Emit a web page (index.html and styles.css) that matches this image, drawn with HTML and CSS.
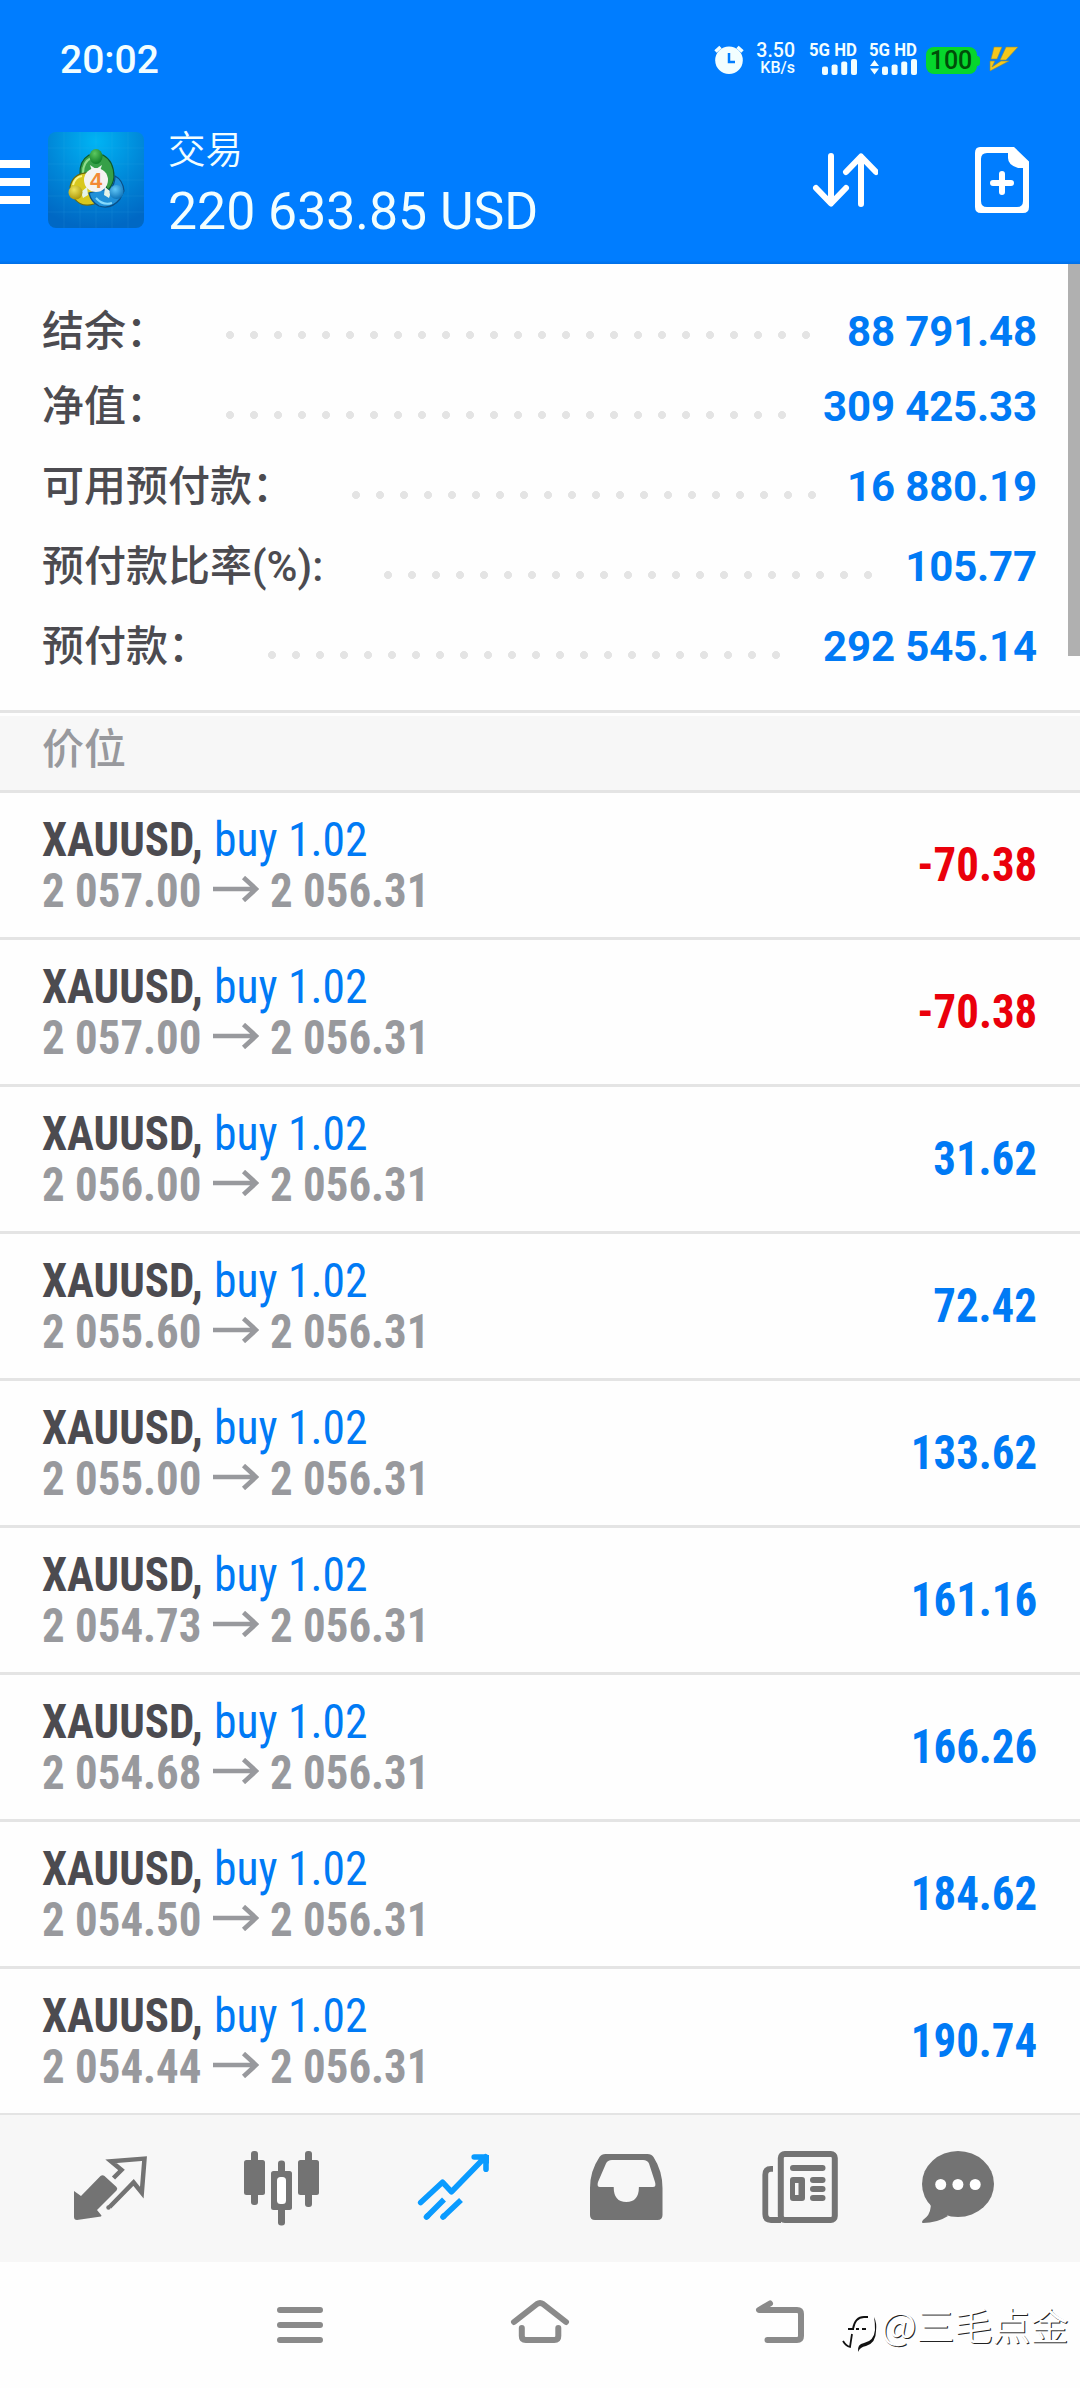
FILE: index.html
```html
<!DOCTYPE html>
<html lang="zh-CN">
<head>
<meta charset="utf-8">
<title>交易</title>
<link rel="stylesheet" href="styles.css">
</head>
<body>
<header class="header">
  <div class="status">
    <span class="clock">20:02</span>
    <svg class="alarm" width="30" height="30" viewBox="714 45 30 30"><circle cx="729" cy="60.300" r="13.800" fill="#f2feff"/><path d="M715.500 51.500l5-4.500M742.500 51.500l-5-4.500" stroke="#f2feff" stroke-width="3.500"/><path d="M729 53v9h6" fill="none" stroke="#007dff" stroke-width="2.500"/></svg>
    <div class="speed"><span>3.50</span><small>KB/s</small></div>
    <div class="signal"><b>5G HD</b>
      <svg width="48" height="17" viewBox="809 59 48 17" fill="#f2feff"><rect x="822" y="66.500" width="6" height="8.500" rx="2"/><rect x="831.600" y="64.500" width="6" height="10.500" rx="2"/><rect x="841.200" y="61.500" width="6" height="13.500" rx="2"/><rect x="851" y="59" width="6" height="16" rx="2"/></svg></div>
    <div class="signal"><b>5G HD</b>
      <svg width="48" height="17" viewBox="809 59 48 17" fill="#f2feff"><path d="M810 66l4.500-6 4.500 6zM810 68.500l4.500 6 4.500-6z"/><rect x="822" y="66.500" width="6" height="8.500" rx="2"/><rect x="831.600" y="64.500" width="6" height="10.500" rx="2"/><rect x="841.200" y="61.500" width="6" height="13.500" rx="2"/><rect x="851" y="59" width="6" height="16" rx="2"/></svg></div>
    <div class="battery">100</div>
    <svg class="bolt" width="30" height="26" viewBox="990 46 30 26"><path d="M995 47h8l-5 12h-6zM1007 47h12l-12 13h-6zM991 61h5l-3 6 9-6h8l-19 10z" fill="#f6c71c" stroke="#7d8a50" stroke-width=".6"/></svg>
  </div>
  <div class="appbar">
    <svg class="menu" width="30" height="44" viewBox="0 0 30 44" fill="#fff"><path d="M0 0h30v8H0zM0 18h30v8H0zM0 36h30v8H0z"/></svg>
    <svg class="logo" width="96" height="96" viewBox="0 0 96 96">
      <defs>
        <radialGradient id="sky" cx=".5" cy=".1" r=".9"><stop offset="0" stop-color="#00b4f4"/><stop offset=".55" stop-color="#0087d8"/><stop offset="1" stop-color="#0068c4"/></radialGradient>
        <radialGradient id="gr" cx=".4" cy=".3" r=".8"><stop offset="0" stop-color="#5cc860"/><stop offset="1" stop-color="#04731f"/></radialGradient>
        <radialGradient id="ye" cx=".4" cy=".3" r=".8"><stop offset="0" stop-color="#eee45a"/><stop offset="1" stop-color="#a58e00"/></radialGradient>
        <radialGradient id="bl" cx=".4" cy=".3" r=".8"><stop offset="0" stop-color="#62c8f8"/><stop offset="1" stop-color="#0468b0"/></radialGradient>
      </defs>
      <rect width="96" height="96" rx="8" fill="url(#sky)"/>
      <path d="M16 0v96M32 0v96M48 0v96M64 0v96M80 0v96M0 16h96M0 32h96M0 48h96M0 64h96M0 80h96" stroke="#41b6ee" stroke-opacity=".12" fill="none"/>
      <g stroke-width="1.200">
        <path d="M32 43q-1-14 9-20h14q11 6 11 22-1 8-6 13l-6-10z" fill="#36a048" stroke="#0e5a2c"/>
        <path d="M35 41q0-11 8-15" fill="none" stroke="#8fdc8c" stroke-width="2"/>
        <path d="M42 41q-17-1-20 14l4 11q7 10 20 6l8-7-12-8z" fill="#d8c81e" stroke="#6a6a10"/>
        <path d="M25 53q2-8 9-9" fill="none" stroke="#fbf48a" stroke-width="2"/>
        <path d="M62 58q5-6 5-14 8 4 9 15l-4 8q-9 11-21 7-8-4-10-13l12-3z" fill="#2090d8" stroke="#0b4f86"/>
        <path d="M48 66q7 8 16 5" fill="none" stroke="#86dafc" stroke-width="2"/>
      </g>
      <path d="M42 33l6 4 6-4-2 6h-8zM33 60l6-5 1 8-5 3zM63 60l-6-5-1 8 5 3z" fill="#e4f3e8"/>
      <ellipse cx="48" cy="24.500" rx="6.500" ry="7.500" fill="url(#gr)"/><circle cx="27.500" cy="60.500" r="7" fill="url(#ye)"/><circle cx="68.500" cy="60" r="7" fill="url(#bl)"/>
      <circle cx="48" cy="48" r="12" fill="#f4f3f1"/>
      <text x="48" y="56" text-anchor="middle" class="four">4</text>
    </svg>
    <div class="titles"><div class="title">交易</div><div class="total"><span>220 633.85 USD</span></div></div>
    <svg class="sort" width="66" height="60" viewBox="812 150 66 60" fill="none" stroke="#fff" stroke-width="6" stroke-linecap="round" stroke-linejoin="round"><path d="M831 156v47M816 188l15 15.500 15-15.500M861 204v-47M846 172l15-15.500 15 15.500"/></svg>
    <svg class="doc" width="54" height="66" viewBox="975 147 54 66"><path fill="#fff" fill-rule="evenodd" d="M980 147h34l15 14.500V207q0 6-6 6h-42q-6 0-6-6v-54q0-6 5-6zM987 153q-6 0-6 6v42q0 6 6 6h30q6 0 6-6v-33h-5q-10-3-10-10v-5z"/><path d="M1002 174v18M993 183h18" stroke="#fff" stroke-width="6" stroke-linecap="round"/></svg>
  </div>
</header>

<main class="content">
  <div class="scrollbar"></div>
  <section class="summary">
    <div class="sum"><span class="label">结余：</span><i class="dots"></i><b>88 791.48</b></div>
    <div class="sum"><span class="label">净值：</span><i class="dots"></i><b>309 425.33</b></div>
    <div class="sum"><span class="label">可用预付款：</span><i class="dots"></i><b>16 880.19</b></div>
    <div class="sum"><span class="label">预付款比率(%):</span><i class="dots"></i><b>105.77</b></div>
    <div class="sum"><span class="label">预付款：</span><i class="dots"></i><b>292 545.14</b></div>
  </section>
  <h2 class="section">价位</h2>
  <svg width="0" height="0" class="defs"><symbol id="arrow" viewBox="0 0 46 26"><path d="M0 13h42M30.500 1.500L43 13 30.500 24.500" fill="none" stroke="#98999d" stroke-width="4.600"/></symbol></svg>
  <ul class="positions">
    <li><div><div class="l1"><b>XAUUSD,</b><span>buy 1.02</span></div><div class="l2"><b>2 057.00</b><svg><use href="#arrow"/></svg><b>2 056.31</b></div></div><strong class="loss">-70.38</strong></li>
    <li><div><div class="l1"><b>XAUUSD,</b><span>buy 1.02</span></div><div class="l2"><b>2 057.00</b><svg><use href="#arrow"/></svg><b>2 056.31</b></div></div><strong class="loss">-70.38</strong></li>
    <li><div><div class="l1"><b>XAUUSD,</b><span>buy 1.02</span></div><div class="l2"><b>2 056.00</b><svg><use href="#arrow"/></svg><b>2 056.31</b></div></div><strong>31.62</strong></li>
    <li><div><div class="l1"><b>XAUUSD,</b><span>buy 1.02</span></div><div class="l2"><b>2 055.60</b><svg><use href="#arrow"/></svg><b>2 056.31</b></div></div><strong>72.42</strong></li>
    <li><div><div class="l1"><b>XAUUSD,</b><span>buy 1.02</span></div><div class="l2"><b>2 055.00</b><svg><use href="#arrow"/></svg><b>2 056.31</b></div></div><strong>133.62</strong></li>
    <li><div><div class="l1"><b>XAUUSD,</b><span>buy 1.02</span></div><div class="l2"><b>2 054.73</b><svg><use href="#arrow"/></svg><b>2 056.31</b></div></div><strong>161.16</strong></li>
    <li><div><div class="l1"><b>XAUUSD,</b><span>buy 1.02</span></div><div class="l2"><b>2 054.68</b><svg><use href="#arrow"/></svg><b>2 056.31</b></div></div><strong>166.26</strong></li>
    <li><div><div class="l1"><b>XAUUSD,</b><span>buy 1.02</span></div><div class="l2"><b>2 054.50</b><svg><use href="#arrow"/></svg><b>2 056.31</b></div></div><strong>184.62</strong></li>
    <li><div><div class="l1"><b>XAUUSD,</b><span>buy 1.02</span></div><div class="l2"><b>2 054.44</b><svg><use href="#arrow"/></svg><b>2 056.31</b></div></div><strong>190.74</strong></li>
  </ul>
</main>

<nav class="tabs">
  <svg viewBox="24 0 172 147"><path d="M74 76l7 5 19.500-20q2-1.500 4 0l12 11q1.500 1.500 0 3.500L97 95l4.500 5.500-.5 1L77 105q-3 0-3-3z" fill="#737373"/><path d="M113.500 63l8-8-10.500-8.800 33.500-2.600-2.700 34-8.200-10.100-24 24.500" class="line" stroke-width="4.500"/><circle cx="108.500" cy="92.500" r="2.200" fill="#737373"/></svg>
  <svg viewBox="196 0 172 147" fill="#737373"><rect x="244" y="45" width="21" height="35" rx="2.500"/><rect x="251" y="36" width="7" height="54" rx="3"/><rect x="278" y="45.500" width="7" height="65" rx="3"/><rect x="271" y="56" width="21" height="39" rx="2.500"/><rect x="277" y="62" width="9" height="27" rx="3.500" fill="#fff"/><rect x="298" y="45" width="21" height="35" rx="2.500"/><rect x="305" y="36" width="7" height="56" rx="3"/></svg>
  <svg viewBox="368 0 172 147"><g fill="none" stroke="#0a9bff" stroke-width="5.600" stroke-linecap="round"><path d="M420.700 87.500l21.800-20.300 9 9.600 34-35M474.200 42h11.800v12.200" stroke-linejoin="round"/><path d="M426.500 102L444 84.500M443 102l18-17" stroke-linecap="butt"/><path d="M426.500 102l1-1M443 102l1-1"/></g><path d="M481 40h8v9z" fill="#0a9bff"/></svg>
  <svg viewBox="540 0 172 147"><path fill="#737373" fill-rule="evenodd" d="M605.500 39h42q4 0 6 3 9 14 9 31v27q0 5-5 5H595q-5 0-5-5V73q0-17 9.500-31 2-3 6-3zM612 45q-4.500 0-6 3.500L598 67q-1.500 5 2 5h13.700q0 15 12.600 15t12.600-15H653q3.500 0 2-5l-6-18.500q-1.500-3.500-6-3.500z"/></svg>
  <svg viewBox="712 0 172 147"><rect x="780.800" y="39" width="54" height="66" rx="4" class="line" stroke-width="6"/><path d="M773 53.800h-2q-5.700 0-5.700 6V99q0 6 5.700 6h10" class="line" stroke-width="5.800"/><g fill="#737373"><rect x="790" y="50" width="35.500" height="6" rx="3"/><path fill-rule="evenodd" d="M793 62h9q3 0 3 3v18q0 3-3 3h-9q-3 0-3-3V65q0-3 3-3zm2 6v12h3.500V68z"/><rect x="810" y="62" width="15.500" height="6" rx="3"/><rect x="810" y="71" width="15.500" height="6" rx="3"/><rect x="810" y="80" width="15.500" height="6" rx="3"/></g></svg>
  <svg viewBox="884 0 172 147"><ellipse cx="958" cy="69" rx="36" ry="33" fill="#737373"/><path d="M926 84q6 5 4.500 9-.5 7-7.500 12-2 2.500 0 3 14 0 25-7z" fill="#737373"/><g fill="#fff"><circle cx="940.700" cy="69.500" r="5.500"/><circle cx="957.900" cy="69.500" r="5.500"/><circle cx="975.200" cy="69.500" r="5.500"/></g></svg>
</nav>

<footer class="sysnav">
  <svg width="60" height="60" viewBox="270 33 60 60"><path d="M280 48h40M280 63h40M280 78h40"/></svg>
  <svg width="60" height="60" viewBox="510 33 60 60"><path d="M514 60l23-18q3-2 6 0l23 18M521.800 66v8q0 4 4 4h28.500q4 0 4-4v-8"/></svg>
  <svg width="60" height="60" viewBox="750 33 60 60"><path d="M770 41.500L759 48h38q4 0 4 4v22q0 4-4 4h-29.500"/></svg>
  <div class="watermark"><svg width="40" height="44" viewBox="0 0 40 44"><path d="M7 18h6M12 18q2-12 11-12h4M15 18h3M21 18h4M11 23l-2 13q-4-1-7-6" fill="none" stroke="#111" stroke-width="1.800"/><path d="M33 6q3 6 2 14 0 12-10 15-6 1-8 6-1-8 6-9 10-2 11-13 0-8-1-13z" fill="#111"/></svg><span>@三毛点金</span></div>
</footer>
</body>
</html>
```
FILE: styles.css
```css
* { box-sizing: border-box; }
body { margin: 0; width: 1080px; height: 2388px; overflow: hidden; background: #fefefe; font-family: Roboto, "Noto Sans CJK SC", sans-serif; display: flex; flex-direction: column; }
svg { display: block; flex: none; }
.header { height: 264px; flex: none; color: #f2feff; background: linear-gradient(#007dff 0 260px, #006fe6 264px); }
.status { display: flex; height: 118px; align-items: flex-start; }
.clock { width: 652px; margin: 37px 0 0 60px; font-size: 39px; line-height: 46px; font-weight: 500; }
.alarm { margin: 45px 11px 0 2px; }
.speed { width: 40px; height: 34px; margin-top: 42px; display: flex; flex-direction: column; align-items: flex-end; font-weight: 500; font-size: 19.500px; line-height: 18px; }
.speed small { font-size: 16px; line-height: 16px; }
.signal { width: 48px; margin: 41px 0 0 14px; }
.signal + .signal { margin-left: 12px; }
.signal b { display: block; font-size: 18px; line-height: 18px; white-space: nowrap; transform: scaleX(.93); transform-origin: 0 0; }
.battery { width: 51px; height: 27px; margin: 47px 12px 0 9px; padding-right: 1px; position: relative; border-radius: 8px; background: #06d62c; color: #004d08; font-size: 25px; line-height: 28px; font-weight: 500; text-align: center; }
.battery::after { content: ""; position: absolute; right: -3px; top: 9px; width: 4px; height: 10px; border-radius: 0 3px 3px 0; background: #06d62c; }
.bolt { margin-top: 46px; }
.appbar { display: flex; height: 146px; align-items: flex-start; }
.menu { margin: 42px 18px 0 0; }
.logo { margin: 14px 24px 0 0; }
.four { font: 700 22px "Liberation Sans", sans-serif; fill: #f28a35; }
.titles { width: 644px; padding-top: 6px; }
.title { font-size: 37.500px; line-height: 52px; height: 58px; font-weight: 350; }
.total { font-size: 52px; line-height: 60px; font-weight: 400; white-space: nowrap; }
.total span { display: inline-block; transform: scaleX(.995); transform-origin: 0 0; }
.sort { margin: 32px 97px 0 0; }
.doc { margin-top: 29px; }

.content { position: relative; height: 1849px; flex: none; }
.scrollbar { position: absolute; right: 0; top: 0; width: 12px; height: 392px; background: #b0b0b0; }
.summary { height: 449px; padding: 28px 43px 0 42px; border-bottom: 3px solid #e4e4e4; }
.sum { display: flex; height: 80px; color: #4c4b50; font-size: 42px; line-height: 79px; font-weight: 500; white-space: nowrap; }
.sum:first-child { height: 75px; }
.sum b { color: #007af5; font-weight: 700; letter-spacing: -.15px; }
.dots { width: 528px; height: 8px; margin: 44px auto 0 50px; background: radial-gradient(circle, #e4e4e4 3.700px, transparent 4.300px) 0 0 / 24px 8px; }
.sum:nth-child(1) .dots { width: 600px; margin-top: 39px; }
.sum:nth-child(2) .dots { width: 576px; }
.sum:nth-child(3) .dots { width: 480px; }
.sum:nth-child(4) .dots { width: 504px; margin-left: 53px; }
.section { margin: 3px 0 0; height: 77px; padding-left: 42px; border-bottom: 3px solid #e4e4e4; background: #f7f7f7; color: #98999d; font-size: 42px; line-height: 68px; font-weight: 500; }
.defs { position: absolute; }
.positions { list-style: none; margin: 0; padding: 0; font-family: "Roboto Condensed", Roboto, sans-serif; font-stretch: 75%; font-size: 48px; }
.positions li { display: flex; justify-content: space-between; height: 147px; padding: 21px 43px 0 42px; border-bottom: 3px solid #e4e4e4; color: #007af5; }
.positions li:last-child { height: 144px; border: 0; }
.l1, .l2 { display: flex; line-height: 51px; height: 51px; white-space: nowrap; }
.l1 b, .l1 span, .l2 b { display: block; transform: scaleX(.935); transform-origin: 0 0; }
.l1 b { width: 172px; color: #4c4b50; }
.l1 span { transform: scaleX(.95); }
.l2 { color: #98999d; }
.l2 b { width: 171px; }
.l2 svg { width: 46px; height: 26px; margin: 11px 11px 0 0; }
.positions strong { line-height: 102px; transform: scaleX(.935); transform-origin: 100% 0; }
.positions .loss { color: #ea000b; }

.tabs { display: flex; height: 149px; flex: none; padding: 0 24px; background: #f7f7f7; border-top: 2px solid #e4e4e4; }
.tabs svg { width: 172px; height: 147px; }
.line { fill: none; stroke: #737373; }
.sysnav { position: relative; height: 126px; flex: none; display: flex; gap: 180px; padding: 33px 0 0 270px; }
.sysnav > svg { fill: none; stroke: #8a8a8a; stroke-width: 6; stroke-linecap: round; stroke-linejoin: round; }
.watermark { position: absolute; left: 841px; top: 37px; display: flex; color: #fff; font-size: 38px; line-height: 50px; font-weight: 350; white-space: nowrap; font-family: "Noto Sans CJK SC", sans-serif; text-shadow: 1px 1px 0 #222; }
.watermark svg { margin-top: 12px; }
```
